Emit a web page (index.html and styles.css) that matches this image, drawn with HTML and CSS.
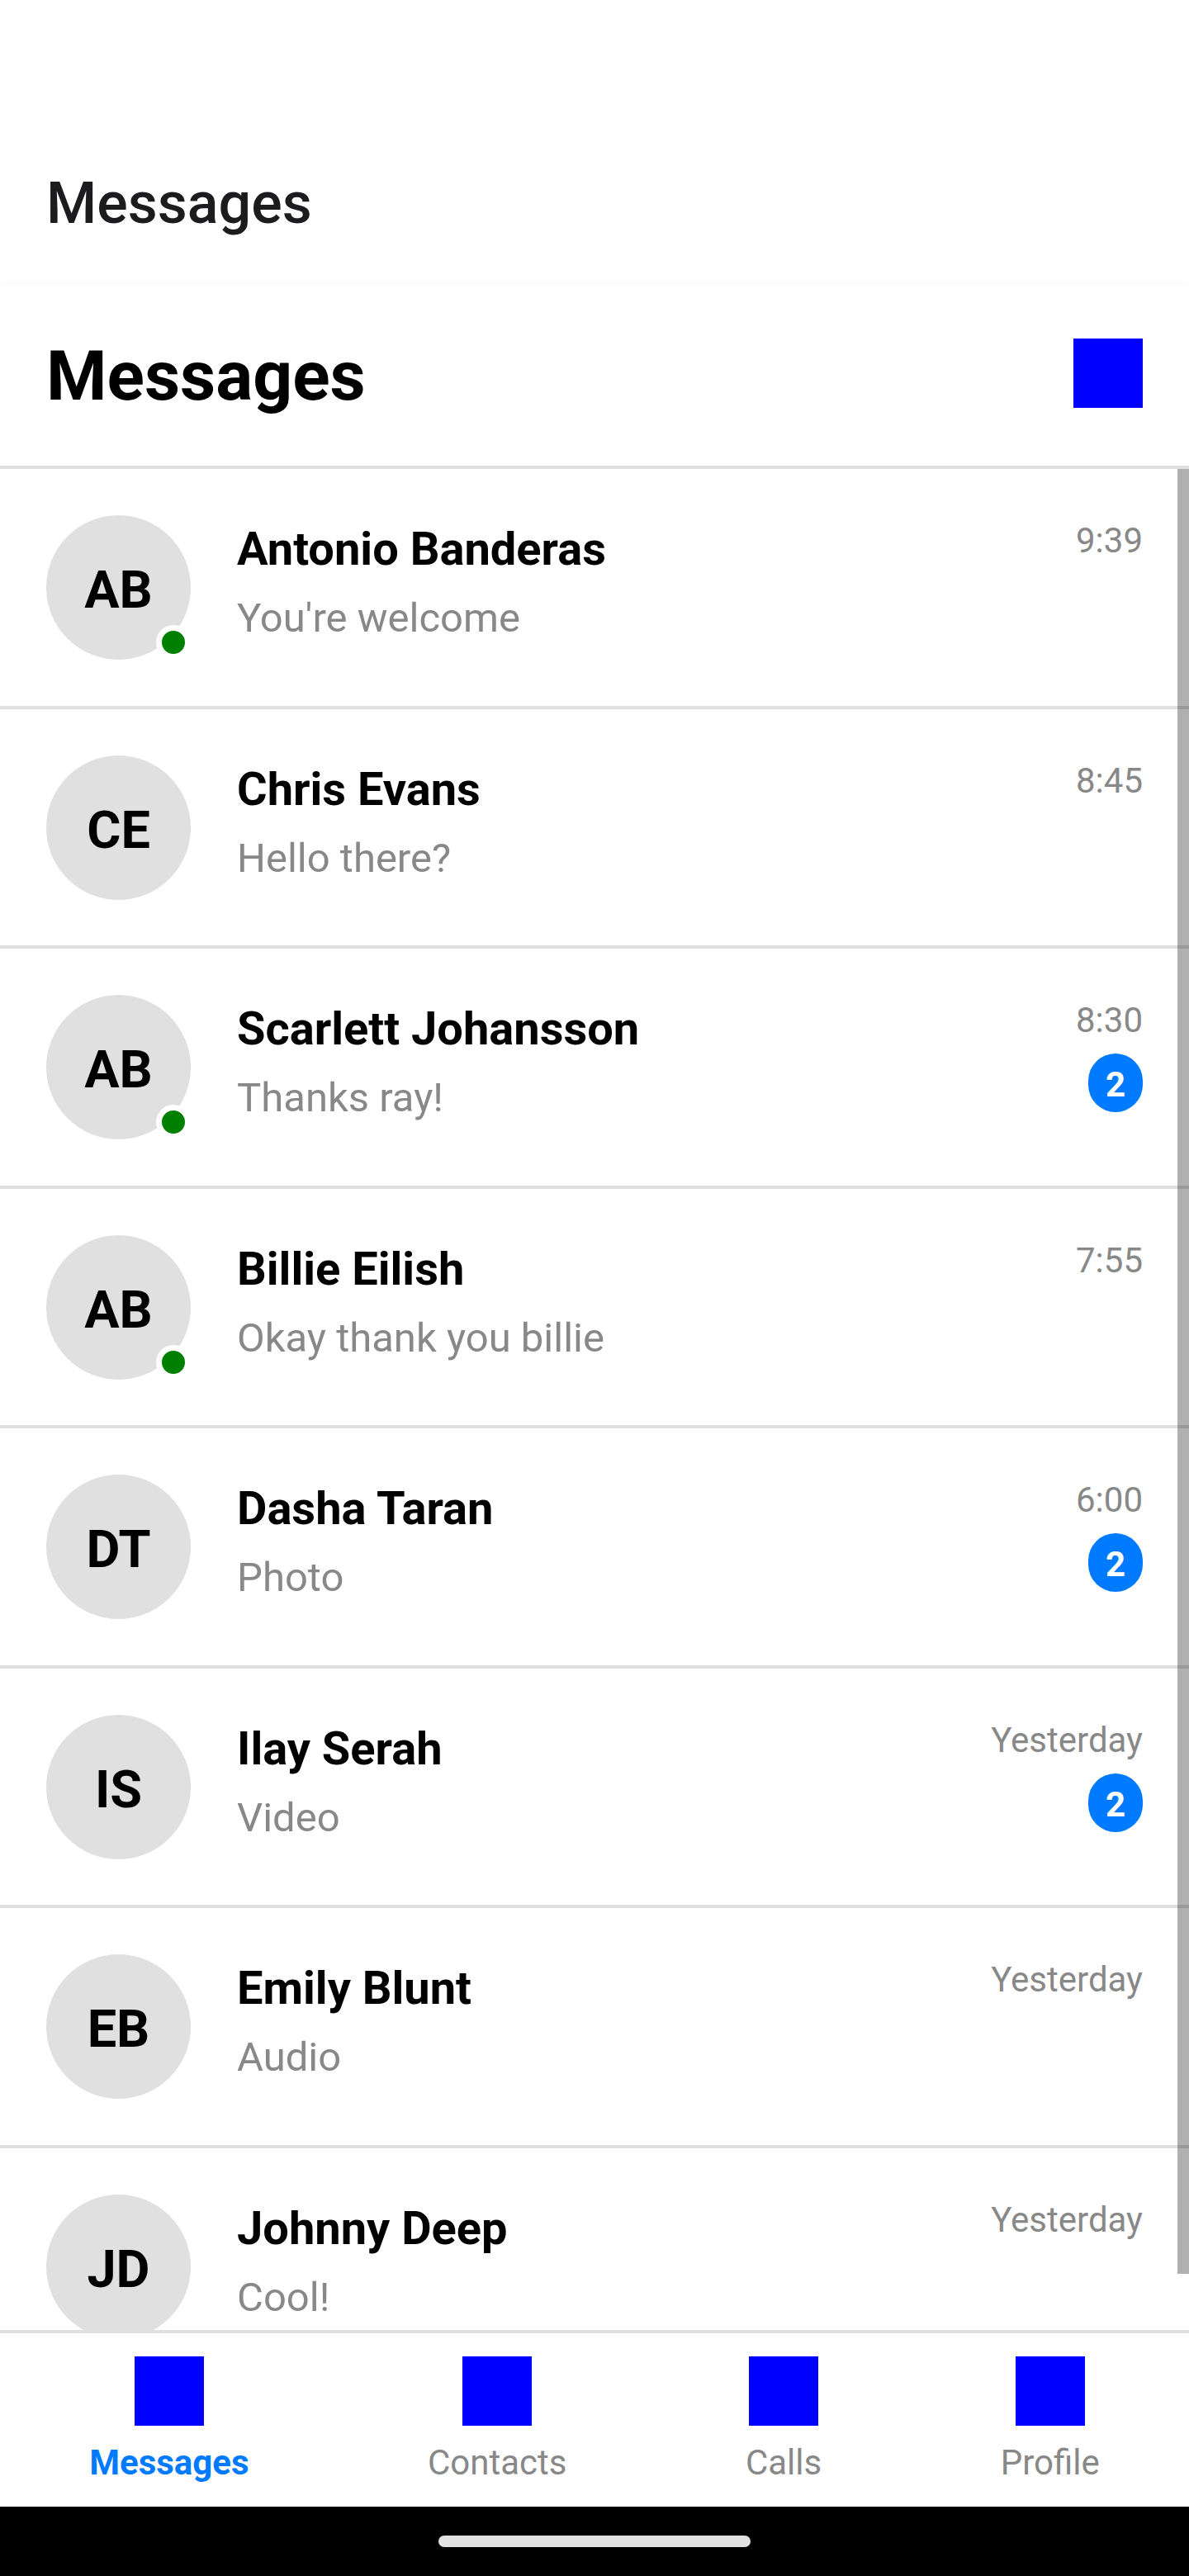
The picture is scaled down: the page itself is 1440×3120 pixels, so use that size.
FILE: index.html
```html
<!DOCTYPE html>
<html lang="en">
<head>
  <meta charset="utf-8">
  <meta name="viewport" content="width=device-width, initial-scale=1">
  <title>Messages</title>
  <link rel="stylesheet" href="styles.css">
</head>
<body>
  <div class="app">
    <header class="app-bar">
      <p class="app-bar-title">Messages</p>
    </header>
    <div class="page-header">
      <h1 class="page-title">Messages</h1>
      <button class="icon" type="button" aria-label="New message"></button>
    </div>
    <main class="conversations">
      <ul class="conversation-list">
        <li class="conversation">
          <div class="avatar">AB<span class="online"></span></div>
          <div class="summary"><h2 class="name">Antonio Banderas</h2><p class="preview">You're welcome</p></div>
          <div class="meta"><time class="time">9:39</time></div>
        </li>
        <li class="conversation">
          <div class="avatar">CE</div>
          <div class="summary"><h2 class="name">Chris Evans</h2><p class="preview">Hello there?</p></div>
          <div class="meta"><time class="time">8:45</time></div>
        </li>
        <li class="conversation">
          <div class="avatar">AB<span class="online"></span></div>
          <div class="summary"><h2 class="name">Scarlett Johansson</h2><p class="preview">Thanks ray!</p></div>
          <div class="meta"><time class="time">8:30</time><span class="badge">2</span></div>
        </li>
        <li class="conversation">
          <div class="avatar">AB<span class="online"></span></div>
          <div class="summary"><h2 class="name">Billie Eilish</h2><p class="preview">Okay thank you billie</p></div>
          <div class="meta"><time class="time">7:55</time></div>
        </li>
        <li class="conversation">
          <div class="avatar">DT</div>
          <div class="summary"><h2 class="name">Dasha Taran</h2><p class="preview">Photo</p></div>
          <div class="meta"><time class="time">6:00</time><span class="badge">2</span></div>
        </li>
        <li class="conversation">
          <div class="avatar">IS</div>
          <div class="summary"><h2 class="name">Ilay Serah</h2><p class="preview">Video</p></div>
          <div class="meta"><span class="time">Yesterday</span><span class="badge">2</span></div>
        </li>
        <li class="conversation">
          <div class="avatar">EB</div>
          <div class="summary"><h2 class="name">Emily Blunt</h2><p class="preview">Audio</p></div>
          <div class="meta"><span class="time">Yesterday</span></div>
        </li>
        <li class="conversation">
          <div class="avatar">JD</div>
          <div class="summary"><h2 class="name">Johnny Deep</h2><p class="preview">Cool!</p></div>
          <div class="meta"><span class="time">Yesterday</span></div>
        </li>
      </ul>
      <div class="scroll-thumb"></div>
    </main>
    <nav class="tabs">
      <a class="tab tab-active" href="#messages" aria-current="page"><span class="icon"></span><span class="tab-label">Messages</span></a>
      <a class="tab" href="#contacts"><span class="icon"></span><span class="tab-label">Contacts</span></a>
      <a class="tab" href="#calls"><span class="icon"></span><span class="tab-label">Calls</span></a>
      <a class="tab" href="#profile"><span class="icon"></span><span class="tab-label">Profile</span></a>
    </nav>
    <div class="system-bar"><span class="home-handle"></span></div>
  </div>
</body>
</html>
```
FILE: styles.css
```css
:root {
  --line: #e0e0e0;
  --muted: #888;
  --accent: #007bff;
}

* {
  box-sizing: border-box;
}

body,
h1,
h2,
p,
ul {
  margin: 0;
  padding: 0;
}

body {
  font-family: Roboto, sans-serif;
  color: #000;
  background: #fff;
}

.app {
  display: flex;
  flex-direction: column;
  height: 100vh;
}

.app-bar {
  position: relative;
  z-index: 1;
  flex: none;
  padding: 205px 56px 53px;
  background: #fff;
  box-shadow: 0 4px 16px rgba(0, 0, 0, 0.02);
}

.app-bar-title {
  font-size: 70px;
  font-weight: 500;
  line-height: 82px;
  color: #1c1c1e;
}

.page-header {
  display: flex;
  flex: none;
  align-items: center;
  justify-content: space-between;
  padding: 56px;
  border-bottom: 4px solid var(--line);
}

.page-title {
  padding-top: 8px;
  font-size: 84px;
  font-weight: 700;
  line-height: 104px;
}

.icon {
  display: block;
  width: 84px;
  height: 84px;
  padding: 0;
  border: 0;
  background: #00f;
}

.conversations {
  position: relative;
  flex: 1;
  min-height: 0;
  overflow: hidden;
}

.conversation-list {
  list-style: none;
}

.conversation {
  display: flex;
  gap: 56px;
  padding: 56px;
  border-bottom: 4px solid var(--line);
}

.conversation:nth-child(even) {
  padding-bottom: 55px;
}

.avatar {
  position: relative;
  display: flex;
  flex: none;
  align-items: center;
  justify-content: center;
  width: 175px;
  height: 175px;
  padding-top: 6px;
  border-radius: 50%;
  font-size: 63px;
  font-weight: 700;
  background: var(--line);
}

.online {
  position: absolute;
  right: 0;
  bottom: 0;
  width: 42px;
  height: 42px;
  border: 7px solid #fff;
  border-radius: 50%;
  background: #008000;
}

.summary {
  flex: 1;
}

.name {
  font-size: 56px;
  font-weight: 700;
  line-height: 82px;
}

.preview {
  margin-top: 8px;
  font-size: 49px;
  line-height: 70px;
  color: var(--muted);
}

.meta {
  display: flex;
  flex-direction: column;
  align-items: flex-end;
  gap: 9px;
}

.time {
  font-size: 42px;
  line-height: 62px;
  color: var(--muted);
}

.badge {
  padding: 9px 21px 5px;
  border-radius: 35px;
  font-size: 42px;
  font-weight: 700;
  line-height: 57px;
  color: #fff;
  background: var(--accent);
}

.scroll-thumb {
  position: absolute;
  top: 0;
  right: 0;
  width: 14px;
  height: 97%;
  background: rgba(0, 0, 0, 0.31);
}

.tabs {
  display: flex;
  flex: none;
  justify-content: space-around;
  padding: 28px 0 24px;
  border-top: 4px solid var(--line);
}

.tab {
  display: flex;
  flex-direction: column;
  gap: 16px;
  align-items: center;
  color: var(--muted);
  text-decoration: none;
}

.tab-label {
  font-size: 42px;
  line-height: 58px;
}

.tab-active {
  font-weight: 700;
  color: var(--accent);
}

.system-bar {
  display: flex;
  flex: none;
  align-items: center;
  justify-content: center;
  height: 84px;
  background: #000;
}

.home-handle {
  width: 378px;
  height: 14px;
  border-radius: 7px;
  background: #e2e2e2;
}
```
